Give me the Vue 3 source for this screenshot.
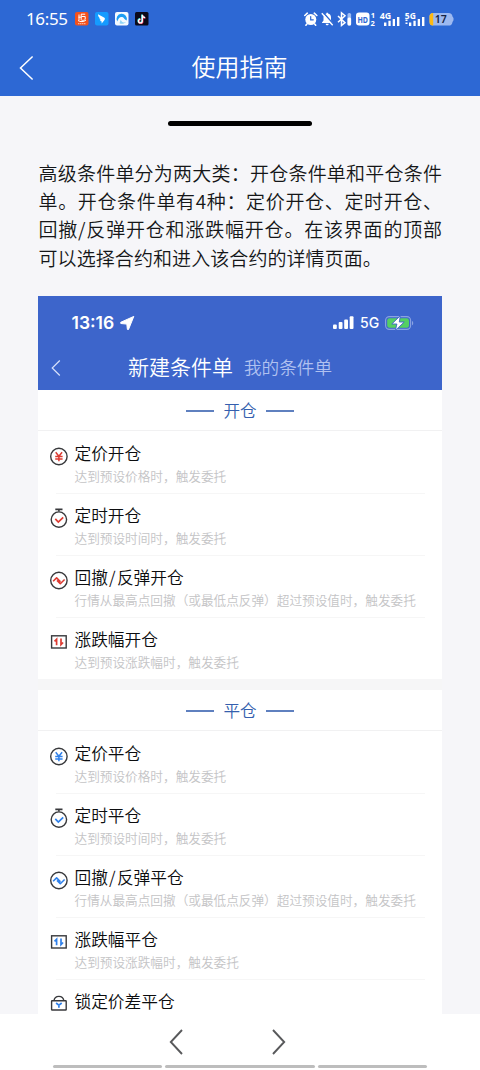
<script setup>
const sections = [
  {
    title: '开仓',
    tone: 'red',
    rows: [
      { icon: 'yen', name: ['定价开仓'], desc: '达到预设价格时，触发委托' },
      { icon: 'timer', name: ['定时开仓'], desc: '达到预设时间时，触发委托' },
      { icon: 'wave', name: ['回撤', '反弹开仓'], desc: '行情从最高点回撤（或最低点反弹）超过预设值时，触发委托' },
      { icon: 'swing', name: ['涨跌幅开仓'], desc: '达到预设涨跌幅时，触发委托' },
    ],
  },
  {
    title: '平仓',
    tone: 'blue',
    rows: [
      { icon: 'yen', name: ['定价平仓'], desc: '达到预设价格时，触发委托' },
      { icon: 'timer', name: ['定时平仓'], desc: '达到预设时间时，触发委托' },
      { icon: 'wave', name: ['回撤', '反弹平仓'], desc: '行情从最高点回撤（或最低点反弹）超过预设值时，触发委托' },
      { icon: 'swing', name: ['涨跌幅平仓'], desc: '达到预设涨跌幅时，触发委托' },
      { icon: 'lock', name: ['锁定价差平仓'], desc: '' },
    ],
  },
]
const intro = [
  '高级条件单分为两大类：开仓条件单和平仓条件',
  '单。开仓条件单有4种：定价开仓、定时开仓、',
  '回撤/反弹开仓和涨跌幅开仓。在该界面的顶部',
  '可以选择合约和进入该合约的详情页面。',
]
</script>

<template>
  <div class="screen">
    <header class="top">
      <div class="status">
        <span class="clock">16:55</span>
        <svg class="apps" width="74" height="14" viewBox="0 0 74 14">
          <rect width="13.5" height="13.5" rx="2" fill="#f4511c" />
          <path d="M4 2.500v6M6 2.200h4.200M6.200 2.200v5.500c0 1 3.800 1 4-.5V4.500H6.500M3.500 5.200h3M3 8.500c2 1.600 6 1.600 8-.5" fill="none" stroke="#fff" stroke-width="1" />
          <path d="M3 11.700h8" stroke="#ffc9b4" stroke-width="1" stroke-dasharray="1.500 .5" />
          <rect x="20" width="13.5" height="13.5" rx="2" fill="#159bff" />
          <path d="M23 2.300l6 3.200c1.300.8 1 1.700.3 2.800l-2.600 3.200-.2-2.200-1.700-.2 1-1.200-1.600-1.100.8-.6c-1.300-.9-2-2.200-2-3.900z" fill="#fff" />
          <rect x="40" width="13.5" height="13.5" rx="2" fill="#f5faff" />
          <path d="M42.200 9.500A5.200 5.200 0 1 1 51.700 8.500C49 7.500 49.300 5 46.500 5c-2.200 0-3.200 2-4.300 4.500z" fill="#1c9df3" />
          <path d="M44.500 11.300c2 1 5 .8 6.500-1.500-2.300 1.500-4.500.2-5.300-2z" fill="#8ed4f8" />
          <rect x="60" width="13.5" height="13.5" rx="1.500" fill="#0c0a1a" />
          <path d="M67.300 2.800v6.200a1.900 1.900 0 1 1-1.900-1.900M67.300 3c.2 1.500 1.200 2.500 2.800 2.600" fill="none" stroke="#2ee6e0" stroke-width="1.500" transform="translate(-.4 -.3)" />
          <path d="M67.300 2.800v6.200a1.900 1.900 0 1 1-1.900-1.900M67.300 3c.2 1.500 1.200 2.500 2.800 2.600" fill="none" stroke="#f43a62" stroke-width="1.500" transform="translate(.4 .4)" />
          <path d="M67.300 2.800v6.200a1.900 1.900 0 1 1-1.900-1.900M67.300 3c.2 1.500 1.200 2.500 2.800 2.600" fill="none" stroke="#fff" stroke-width="1.300" />
        </svg>
        <svg class="signals" width="152" height="18" viewBox="0 0 152 18">
          <g fill="none" stroke="#fff" stroke-width="1.600" stroke-linecap="round">
            <circle cx="6.800" cy="9.500" r="5.500" fill="#fff" stroke="none" />
            <path d="M.8 5.500l2.500-2.300M12.800 5.500l-2.500-2.300M2.900 14l-1 1.200M10.700 14l1 1.200" />
            <path d="M6.700 6.500v3.300h2.600" stroke="#2d68d4" stroke-width="1.200" />
          </g>
          <path d="M18 12.500l1.500-2V7.500c0-2.300 1.200-3.600 3-4V2.700H24v.8c1.900.4 3 1.800 3 4v3l1.500 2v.6H18zM21.700 13.700h3c0 2-3 2-3 0z" fill="#fff" />
          <path d="M18.900 2.300l11 12.400" stroke="#2d68d4" stroke-width="1.600" />
          <path d="M17.800 3.300l10.900 12" stroke="#fff" stroke-width="1.400" />
          <path d="M34 6l7 6.700-3.500 2.800V2.800L41 5.800 34 12.300" fill="none" stroke="#fff" stroke-width="1.500" />
          <rect x="43.500" y="3" width="3.600" height="12.500" rx="1.600" fill="#9dbcf4" />
          <rect x="43.500" y="7.500" width="3.600" height="8" rx="1.500" fill="#fff" />
          <rect x="52" y="2.500" width="13.500" height="13" rx="3" fill="#fff" />
          <text x="58.750" y="12.500" text-anchor="middle" font-size="9" font-weight="700" fill="#2d68d4" textLength="10.500" lengthAdjust="spacingAndGlyphs">HD</text>
          <g fill="#fff" font-weight="700">
            <text font-size="7.500"><tspan x="66.800" y="8.200">1</tspan><tspan x="66.400" y="15.900">2</tspan></text>
            <text x="75.800" y="8.600" font-size="8.500" textLength="11.500" lengthAdjust="spacingAndGlyphs">4G</text>
            <text x="100.800" y="8.600" font-size="8.500" textLength="11" lengthAdjust="spacingAndGlyphs">5G</text>
          </g>
          <g fill="#fff">
            <path d="M80 12.500h2.400V16H80zM84.400 10.800h2.300V16h-2.300zM88.700 9h2.300v7h-2.300zM93 7h2.400v9H93z" />
            <path d="M105 12.500h2.300V16H105zM109.400 10.800h2.300V16h-2.300zM113.700 9h2.300v7h-2.300zM118 7h2.400v9H118z" />
            <path d="M101.500 9.500h2v1.500h-2zM101.500 12.500h2V14h-2z" />
          </g>
          <path d="M129 3h15.500a4 4 0 0 1 4 3.500l1 1.600v2.200l-1 1.600a4 4 0 0 1-4 3.600H129a3.500 3.500 0 0 1-3.500-3.500V6.500A3.500 3.500 0 0 1 129 3z" fill="#9db9f0" />
          <path d="M129.200 3v12.500a3.600 3.600 0 0 1-3.700-3.500V6.500A3.600 3.600 0 0 1 129.200 3z" fill="#fdb912" />
          <text x="136.800" y="13.400" text-anchor="middle" font-size="11.500" font-weight="600" fill="#152344" textLength="12" lengthAdjust="spacingAndGlyphs">17</text>
        </svg>
      </div>
      <div class="titlebar">
        <svg class="back" width="16" height="26" viewBox="0 0 16 26"><path d="M13.600 1.500L1.500 13l12.100 11.500" fill="none" stroke="#fff" stroke-width="1.500" /></svg>
        <h1>使用指南</h1>
      </div>
    </header>

    <main class="content">
      <div class="handle"></div>
      <div class="intro">
        <p v-for="line in intro" :key="line">{{ line }}</p>
      </div>

      <div class="phone">
        <div class="phone-top">
          <div class="phone-status">
            <span class="phone-clock">13:16</span>
            <svg class="nav-arrow" width="15" height="14" viewBox="0 0 15 14"><path d="M13.800.4L.7 6.300l.1 1.200 6 .6.600 5.300 1.100.1z" fill="#fff" stroke="#fff" stroke-width="1" stroke-linejoin="round" /></svg>
            <svg class="bars" width="21" height="14" viewBox="0 0 21 14" fill="#fff">
              <rect x="0" y="8.500" width="3.800" height="4.500" rx="1" /><rect x="5.700" y="6" width="3.800" height="7" rx="1" /><rect x="11.200" y="3.500" width="3.800" height="9.500" rx="1" /><rect x="16.700" y=".3" width="3.800" height="12.700" rx="1" />
            </svg>
            <span class="net">5G</span>
            <svg class="battery" width="29" height="16" viewBox="0 0 29 16">
              <rect x=".6" y="1.600" width="25" height="12.800" rx="3.800" fill="none" stroke="#8aa3e2" stroke-width="1.100" />
              <path d="M27 6v4.300c1.600-.5 1.600-3.800 0-4.300z" fill="#8aa3e2" />
              <rect x="2.200" y="3.200" width="21.800" height="9.600" rx="2.200" fill="#54cf62" />
              <path d="M15.300.8L6.800 9h5.100l-1.500 6.400L19.200 7h-4.900z" fill="#fff" stroke="#3d65cb" stroke-width=".9" />
            </svg>
          </div>
          <div class="tabs">
            <svg class="tab-back" width="10" height="18" viewBox="0 0 10 18"><path d="M8.800 1.500L1.200 9l7.600 7.500" fill="none" stroke="#d7e1fb" stroke-width="1.200" /></svg>
            <span class="tab-on">新建条件单</span>
            <span class="tab-off">我的条件单</span>
          </div>
        </div>

        <section v-for="s in sections" :key="s.title" :class="s.tone">
          <h2><i></i><span>{{ s.title }}</span><i></i></h2>
          <div v-for="r in s.rows" :key="r.icon" class="row">
            <svg class="icon" width="20" height="22" viewBox="0 0 20 22" fill="none" stroke="#38393c" stroke-width="1.400">
              <template v-if="r.icon === 'yen'">
                <circle cx="9.900" cy="11.500" r="8.200" />
                <path class="accent" d="M6.700 7.300l3.200 3.900 3.200-3.900M9.900 11v5.200M6.200 11.500h7.400M6.200 13.900h7.400" stroke-width="1.500" />
              </template>
              <template v-else-if="r.icon === 'timer'">
                <circle cx="9.900" cy="12.600" r="7.700" />
                <path d="M6.300 2.400h7.200M9.900 2.600v2" stroke-width="1.600" />
                <path class="accent" d="M6.300 11.900l3 3.100 4.900-4.700" stroke-width="1.700" />
              </template>
              <template v-else-if="r.icon === 'wave'">
                <circle cx="9.900" cy="11.500" r="8.200" />
                <path class="accent" d="M4.100 12.300l3.500-3.400 3.900 3.900M8 11.400l3.300 3.300 4.300-4.200" stroke-width="1.600" stroke-linejoin="round" />
              </template>
              <template v-else-if="r.icon === 'swing'">
                <rect x="2.600" y="4.800" width="14.600" height="12.200" />
                <path class="accent" d="M7.600 14.200V8.200L5.500 10.300M12 7.600v6l2.100-2.100" stroke-width="1.700" />
              </template>
              <template v-else>
                <rect x="2.600" y="7.800" width="14.600" height="9.200" rx=".5" />
                <path d="M5 7.600a4.950 4.950 0 0 1 9.800 0" />
                <path class="accent" d="M7.100 10l2.800 2.200 2.800-2.200M9.900 11.800v3" stroke-width="1.700" />
              </template>
            </svg>
            <div class="label">
              <strong>{{ r.name[0] }}<template v-if="r.name[1]"><b>/</b>{{ r.name[1] }}</template></strong>
              <small>{{ r.desc }}</small>
            </div>
          </div>
        </section>
      </div>
    </main>

    <footer>
      <div class="pager">
        <svg width="15" height="26" viewBox="0 0 15 26"><path d="M13 1L1.800 13 13 25" fill="none" stroke="#58595b" stroke-width="1.900" /></svg>
        <svg width="15" height="26" viewBox="0 0 15 26"><path d="M2 1l11.200 12L2 25" fill="none" stroke="#58595b" stroke-width="1.900" /></svg>
      </div>
      <div class="track"><i></i><i></i><i></i></div>
    </footer>
  </div>
</template>

<style>
body { margin: 0; }
</style>

<style scoped>
* { box-sizing: border-box; }
h1, h2, p { margin: 0; font-weight: inherit; }
.screen {
  width: 480px; height: 1070px; overflow: hidden;
  display: flex; flex-direction: column;
  background: #f6f6f9; color: #222326;
  font-family: "Noto Sans CJK SC", sans-serif; font-weight: 350;
  white-space: nowrap;
}
.top { height: 96px; flex: none; background: #2d68d4; color: #fff; }
.status { height: 38px; display: flex; align-items: center; padding-left: 26px; }
.clock { width: 49px; font: 400 17px/38px "Noto Sans", sans-serif; letter-spacing: -.35px; }
.apps { margin-top: -1px; }
.signals { margin-left: 155px; font-family: "Noto Sans", sans-serif; }
.titlebar { height: 58px; display: flex; align-items: center; padding: 0 19px; }
.back { margin-top: 2px; }
h1 { flex: 1; margin: -3px 17px 0 0; text-align: center; font-size: 24px; line-height: 40px; }
.content { height: 918px; flex: none; overflow: hidden; padding: 25px 38px 0; }
.handle { width: 144px; height: 5px; margin: 0 auto; border-radius: 3px; background: #000; }
.intro { padding: 33px 0 0 .5px; height: 170px; font-size: 19px; line-height: 28.200px; color: #151618; }
.intro p { text-align-last: justify; }
.intro p:last-child { text-align-last: left; letter-spacing: .08px; }
.phone { width: 404px; background: #f6f6f7; }
.phone-top { height: 94px; background: #3d65cb; color: #fff; }
.phone-status { height: 54px; display: flex; align-items: center; padding-left: 33.500px; }
.phone-clock { width: 48.500px; font: 600 17.500px/54px Inter, sans-serif; letter-spacing: 0; }
.bars { margin-left: 198px; }
.net { width: 31px; padding-left: 6px; font: 500 14px/54px Inter, sans-serif; }
.tabs { height: 36px; display: flex; align-items: center; padding-left: 13px; }
.tab-back { margin-right: 67px; }
.tab-on { width: 116px; font-size: 21px; line-height: 30px; margin-top: -4px; }
.tab-off { font-size: 17.600px; line-height: 26px; margin-top: -2px; color: #b0c1f0; }
section { background: #fff; }
section + section { margin-top: 11px; }
.red { --accent: #dc3b32; }
.blue { --accent: #2f80ea; }
h2 {
  height: 41px; display: flex; align-items: center; justify-content: center; gap: 9.500px;
  border-bottom: 1px solid #f1f1f2; color: #355fae; font-size: 16.600px; line-height: 24px;
}
h2 i { width: 28px; height: 2px; margin-top: 2px; background: #5f80bf; }
.row { height: 62px; display: flex; padding-left: 11px; position: relative; }
.row:not(:last-child)::after { content: ""; position: absolute; left: 18px; right: 17px; bottom: -1px; height: 1px; background: #f6f6f6; }
.icon { flex: none; margin: 14px 5px 0 0; }
.accent { stroke: var(--accent); }
.label { display: flex; flex-direction: column; padding: 10px 0 0 .5px; }
strong { font-weight: 350; font-size: 16.700px; line-height: 25px; color: #0c0d0f; }
b { font-weight: 350; display: inline-block; width: 9px; text-align: center; }
small { font-size: 12.650px; line-height: 20px; color: #c4c4c6; }
footer { height: 56px; background: #fff; flex: none; }
.pager { height: 51px; padding: 15px 0 0 169px; display: flex; gap: 87px; }
.track { display: flex; gap: 3px; padding-left: 53px; }
.track i { width: 109px; height: 3px; border-radius: 2px; background: #bdbdbd; }
.track i:nth-child(2) { width: 150px; }
</style>
